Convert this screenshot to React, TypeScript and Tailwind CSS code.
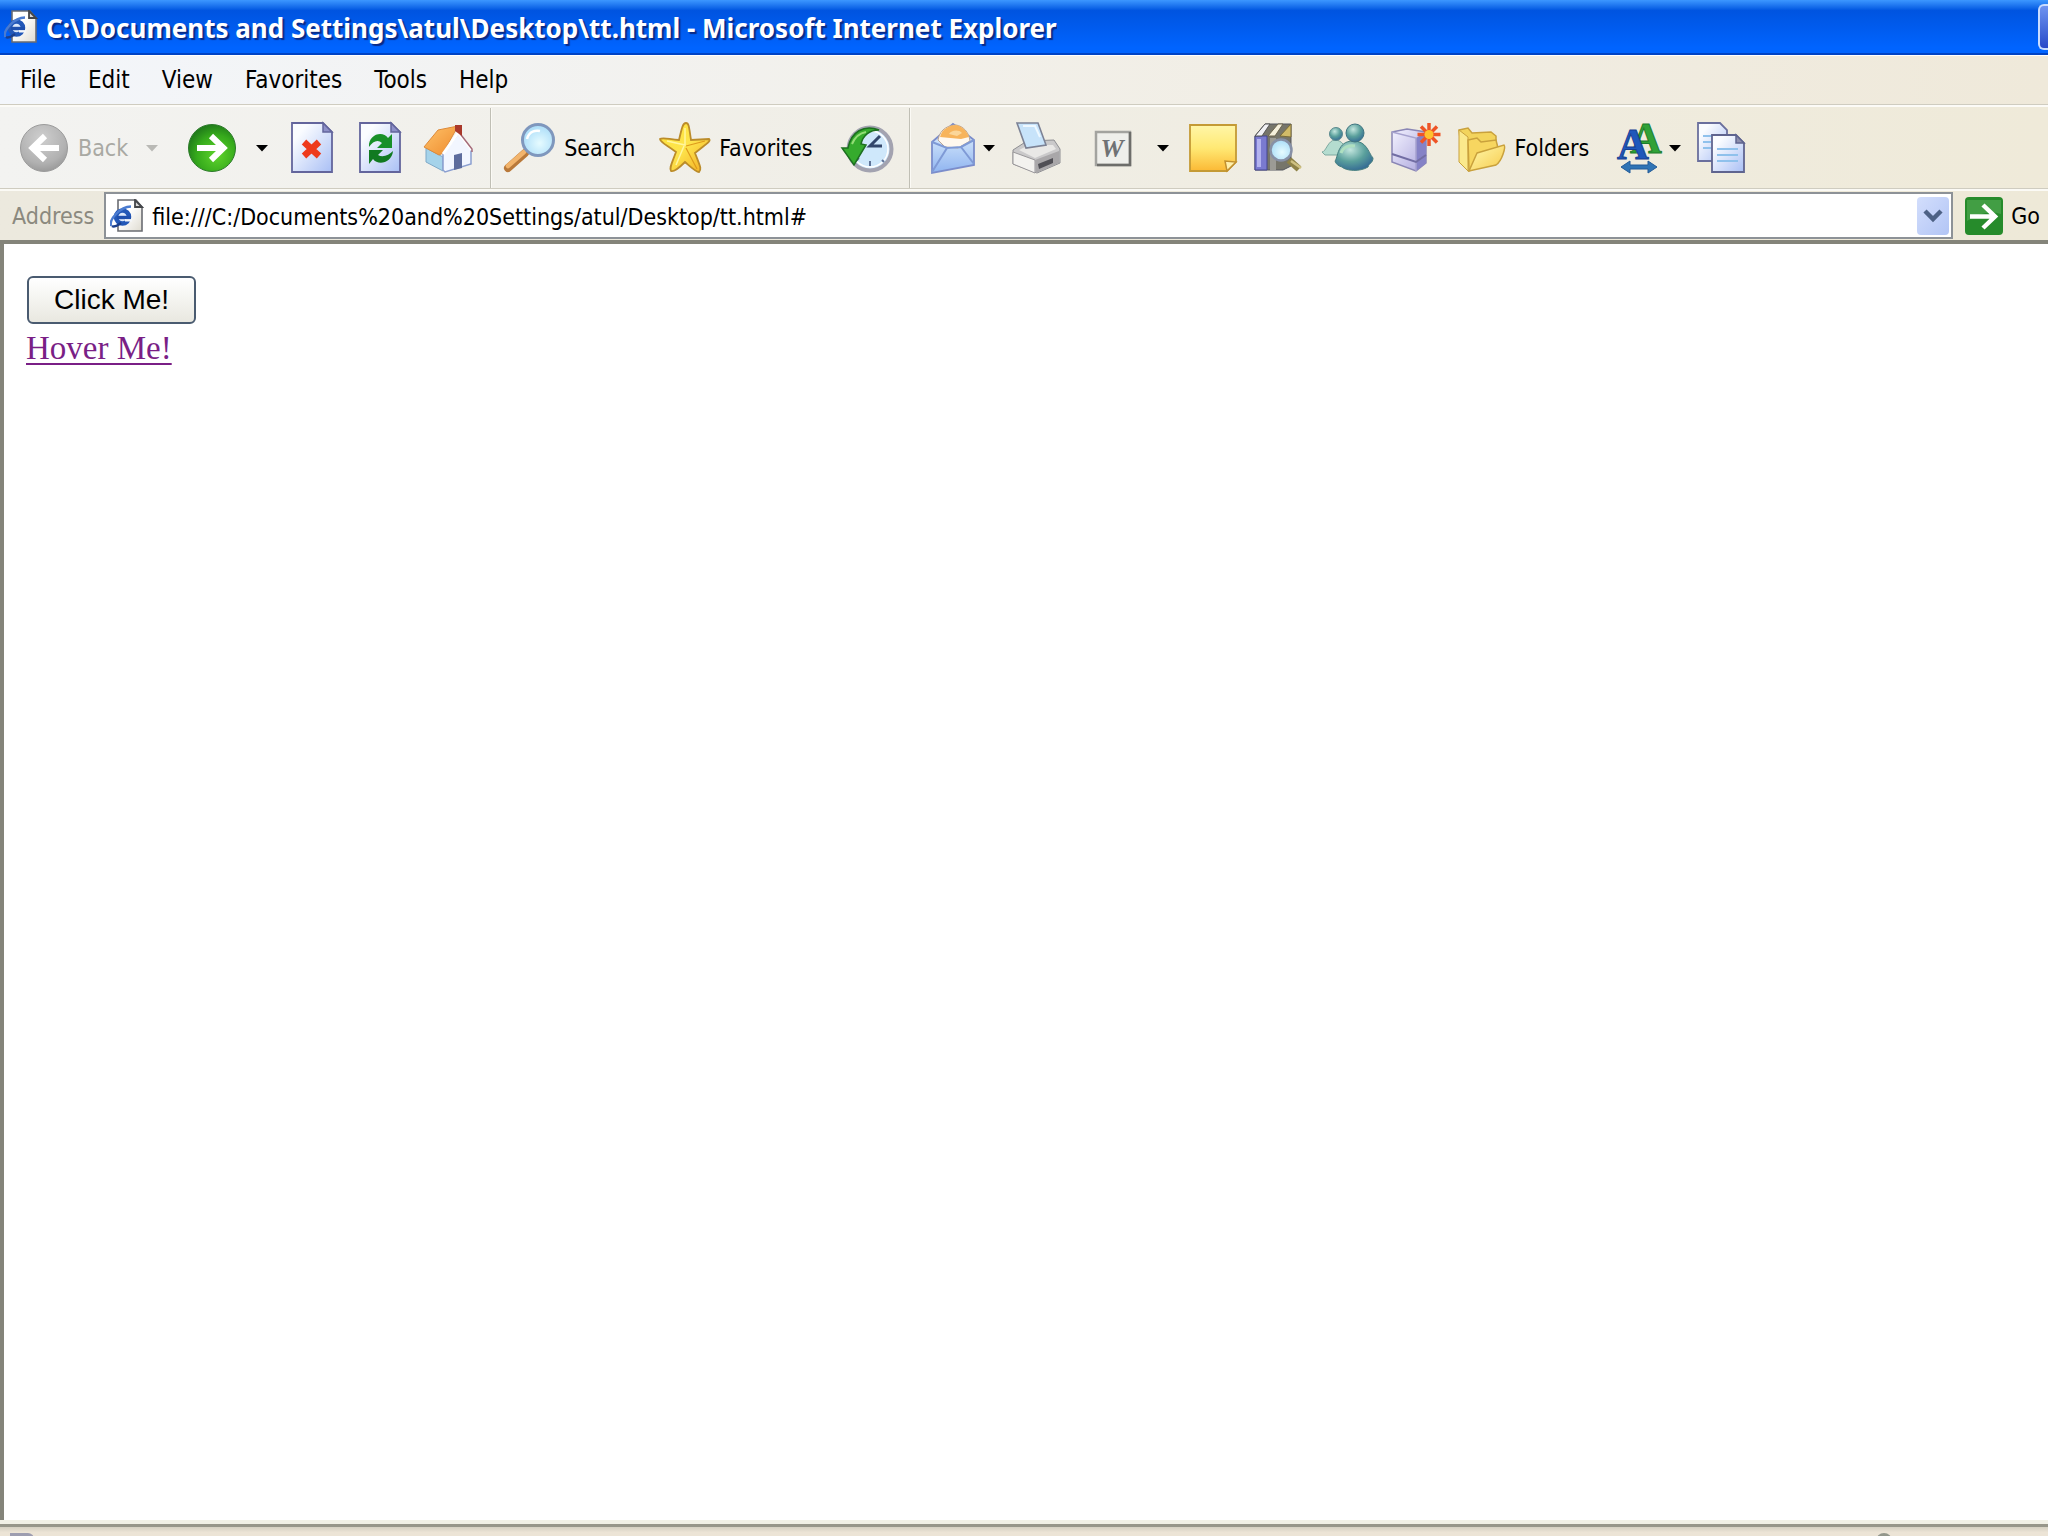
import type { ReactNode } from 'react'

const menuItems = ['File', 'Edit', 'View', 'Favorites', 'Tools', 'Help']

function Icon({ children }: { children: ReactNode }) {
    return (
        <svg viewBox="0 0 52 52" className="size-[52px] shrink-0 overflow-visible" aria-hidden="true">
            {children}
        </svg>
    )
}

function ToolButton({ name, label, className, disabled, children }: {
    name: string
    label?: string
    className: string
    disabled?: boolean
    children: ReactNode
}) {
    return (
        <button
            type="button"
            aria-label={name}
            disabled={disabled}
            className={`flex shrink-0 items-center gap-2 disabled:text-[#a9a9a3] ${className}`}
        >
            <Icon>{children}</Icon>
            {label && <span>{label}</span>}
        </button>
    )
}

function DropArrow({ name, className, disabled }: { name: string; className: string; disabled?: boolean }) {
    return (
        <button type="button" aria-label={name} disabled={disabled} className={`shrink-0 text-black disabled:text-[#b9b9b5] ${className}`}>
            <svg viewBox="0 0 12 8" className="h-2 w-3" aria-hidden="true">
                <path d="M0 1h12L6 7.5z" fill="currentColor" />
            </svg>
        </button>
    )
}

function Separator() {
    return <div className="ml-4 h-20 w-0.5 shrink-0 border-l border-[#c0bfb5] bg-[#fbfaf5]" />
}

function PageIcon({ className }: { className: string }) {
    return (
        <svg viewBox="0 0 34 34" className={className} aria-hidden="true">
            <path d="M8 1h18l6 7v24H8z" fill="url(#paper)" stroke="#6a6c72" strokeWidth="1.6" />
            <path d="M25 1v7h7z" fill="#d8d8d8" stroke="#44464a" strokeWidth="1.8" />
            <circle cx="12.500" cy="18" r="6.500" fill="#dbe8fb" stroke="#2358b8" strokeWidth="4.500" />
            <path d="M7 18.5h14" stroke="#1f50ae" strokeWidth="3.4" />
            <path d="M15 22.500h7v-2.4h-7z" fill="#f4f6fa" />
            <path d="M1 27C-1 20 10 8 21 7.500" fill="none" stroke="#4a7bd0" strokeWidth="2.4" />
            <path d="M2 27c3 2 6-1 9-3" fill="none" stroke="#1b3f8c" strokeWidth="2.4" />
        </svg>
    )
}

function Gradients() {
    return (
        <svg className="absolute size-0" aria-hidden="true">
            <defs>
                <linearGradient id="paper" x1="0" y1="0" x2="1" y2="1">
                    <stop offset="0.4" stopColor="#ffffff" />
                    <stop offset="1" stopColor="#dedbd0" />
                </linearGradient>
                <linearGradient id="bluePaper" x1="0" y1="0" x2="1" y2="1">
                    <stop offset="0.2" stopColor="#fafcff" />
                    <stop offset="1" stopColor="#a9bff5" />
                </linearGradient>
                <radialGradient id="gray" cx="0.45" cy="0.3" r="0.75">
                    <stop offset="0" stopColor="#cfcfcf" />
                    <stop offset="0.7" stopColor="#b1b1b1" />
                    <stop offset="1" stopColor="#959595" />
                </radialGradient>
                <radialGradient id="green" cx="0.6" cy="0.65" r="0.65">
                    <stop offset="0" stopColor="#5fd42c" />
                    <stop offset="0.65" stopColor="#36aa1c" />
                    <stop offset="1" stopColor="#217d1a" />
                </radialGradient>
                <radialGradient id="lens" cx="0.55" cy="0.6" r="0.6">
                    <stop offset="0" stopColor="#e6fbff" />
                    <stop offset="1" stopColor="#a9dcf8" />
                </radialGradient>
                <linearGradient id="gold" x1="0" y1="0" x2="1" y2="1">
                    <stop offset="0" stopColor="#ffe23a" />
                    <stop offset="0.5" stopColor="#fde44c" />
                    <stop offset="1" stopColor="#f3a91f" />
                </linearGradient>
                <linearGradient id="note" x1="0" y1="0" x2="0" y2="1">
                    <stop offset="0" stopColor="#fff6a8" />
                    <stop offset="0.5" stopColor="#ffe974" />
                    <stop offset="1" stopColor="#fbb935" />
                </linearGradient>
                <linearGradient id="roof" x1="0" y1="0" x2="1" y2="1">
                    <stop offset="0" stopColor="#ffc36a" />
                    <stop offset="1" stopColor="#ee8a2c" />
                </linearGradient>
                <linearGradient id="sky" x1="0" y1="0" x2="0" y2="1">
                    <stop offset="0" stopColor="#e8f6ff" />
                    <stop offset="1" stopColor="#8fb4f0" />
                </linearGradient>
                <radialGradient id="person" cx="0.4" cy="0.3" r="0.8">
                    <stop offset="0" stopColor="#c3e6de" />
                    <stop offset="0.5" stopColor="#5aa09c" />
                    <stop offset="1" stopColor="#2c5f92" />
                </radialGradient>
                <linearGradient id="box" x1="0" y1="0" x2="1" y2="1">
                    <stop offset="0" stopColor="#f4f3ff" />
                    <stop offset="1" stopColor="#aaa4dc" />
                </linearGradient>
                <linearGradient id="folder" x1="0" y1="0" x2="1" y2="1">
                    <stop offset="0" stopColor="#fff9b0" />
                    <stop offset="1" stopColor="#f7cb4b" />
                </linearGradient>
            </defs>
        </svg>
    )
}

function TitleBar() {
    return (
        <header className="flex h-[55px] shrink-0 items-center border-b-2 border-[#0043c4] bg-linear-to-b from-[#3c97ff] via-[#0054e0] via-20% to-[#0064ff] to-90% pl-1">
            <PageIcon className="size-[34px] shrink-0" />
            <h1 className="ml-2 truncate pt-0.5 font-['Noto_Sans'] text-[26px] leading-10 font-bold text-white [text-shadow:2px_2px_1px_#0a2a86]">
                C:\Documents and Settings\atul\Desktop\tt.html - Microsoft Internet Explorer
            </h1>
            <button
                type="button"
                aria-label="Minimize"
                className="ml-auto h-[46px] w-2.5 shrink-0 rounded-l-md border-2 border-r-0 border-[#c9dcff] bg-linear-to-b from-[#6f93f0] to-[#2a49c8]"
            />
        </header>
    )
}

function MenuBar() {
    return (
        <nav className="flex h-[50px] shrink-0 items-center gap-8 border-t border-b border-t-white border-b-[#cfccc0] bg-linear-to-r from-[#f3f6fb] via-[#f2f0ea] via-45% to-[#efe9da] pl-5 text-2xl">
            {menuItems.map((item) => (
                <button key={item} type="button">{item}</button>
            ))}
        </nav>
    )
}

function Toolbar() {
    return (
        <div className="flex h-[84px] shrink-0 items-center border-t-2 border-b border-t-[#fcfbf7] border-b-[#cfccc0] bg-linear-to-r from-[#f3f3f1] via-[#f0eee6] via-45% to-[#efead9] pl-[18px]">
            <ToolButton name="Back" label="Back" className="" disabled>
                <circle cx="26" cy="26" r="23.500" fill="url(#gray)" stroke="#9b9b9b" />
                <path d="M41 26H16M27 14 14.500 26 27 38" fill="none" stroke="#fff" strokeWidth="6" />
            </ToolButton>
            <DropArrow name="Back history" className="ml-[18px]" disabled />
            <ToolButton name="Forward" className="ml-7">
                <circle cx="26" cy="26" r="23.500" fill="url(#green)" stroke="#2d7a2b" />
                <path d="M11 26h25M25 14l12.500 12L25 38" fill="none" stroke="#fff" strokeWidth="6" />
            </ToolButton>
            <DropArrow name="Forward history" className="ml-[18px]" />
            <ToolButton name="Stop" className="ml-[18px]">
                <path d="M6 1h31l9 9v40H6z" fill="url(#bluePaper)" stroke="#63659c" strokeWidth="1.8" />
                <path d="M37 1v9h9z" fill="#8e90c8" stroke="#63659c" strokeWidth="1.500" />
                <path d="M18 20l15 14M33 20 18 34" stroke="#ee3a1c" strokeWidth="6.500" />
            </ToolButton>
            <ToolButton name="Refresh" className="ml-4">
                <path d="M6 1h31l9 9v40H6z" fill="url(#bluePaper)" stroke="#63659c" strokeWidth="1.800" />
                <path d="M37 1v9h9z" fill="#8e90c8" stroke="#63659c" strokeWidth="1.500" />
                <path d="M15 25c-1-13 14-17 19-9l4-4v14H23l5-5c-4-4-9-2-13 4z" fill="#189029" />
                <path d="M39 29c-1 12-15 15-20 8l-4 5V28h14l-5 5c5 3 11 0 15-4z" fill="#117a21" />
            </ToolButton>
            <ToolButton name="Home" className="ml-4">
                <path d="M4 26l17 9v14L4 40z" fill="#a5d3ea" stroke="#7ea9c8" />
                <path d="M21 31 36 12l13 15v15L23 50l-2-2z" fill="#f2f6ff" stroke="#8b9fd0" strokeWidth="1.500" />
                <path d="M32 48V33l8-2v15z" fill="#5d6c9d" />
                <path d="M2 25 16 8l20-4-15 27-4 2z" fill="url(#roof)" stroke="#dd8a3a" />
                <path d="M21 32 36 11l14 17" fill="none" stroke="#fff" strokeWidth="3" />
                <path d="M36 9l14 18v3" fill="none" stroke="#a46a78" strokeWidth="1.500" />
                <path d="M33 3h7v11l-7-5z" fill="#a9382a" />
            </ToolButton>
            <Separator />
            <ToolButton name="Search" label="Search" className="ml-3">
                <path d="M21 31 4 46" stroke="#b9793a" strokeWidth="8" strokeLinecap="round" />
                <path d="M20 30 4 44" stroke="#f2b46c" strokeWidth="4.500" strokeLinecap="round" />
                <circle cx="34" cy="18" r="15.500" fill="url(#lens)" stroke="#7f97bd" strokeWidth="3" />
                <path d="M23 17c2-8 9-9 13-8" fill="none" stroke="#fff" strokeWidth="2.500" />
            </ToolButton>
            <ToolButton name="Favorites" label="Favorites" className="ml-6">
                <path
                    d="M27 1c3 0 3 4 5 17l18-1c2 2 0 3-14 14 5 13 7 16 4 19-3 0-6-3-14-10-9 9-12 10-14 9-2-3 1-8 5-19C6 22 1 20 1 17c2-2 8 0 19 1C23 5 24 1 27 1z"
                    fill="url(#gold)"
                    stroke="#bb8c2a"
                    strokeWidth="1.800"
                />
                <path d="M26 6v17L8 19M25 24l-8 19" fill="none" stroke="#fff6a0" strokeWidth="1.500" />
                <path d="M27 24l19-5M27 26l11 21" stroke="#dd9a1c" strokeWidth="1.200" />
            </ToolButton>
            <ToolButton name="History" className="ml-7">
                <circle cx="29" cy="27" r="21.500" fill="#cfe8fb" stroke="#a3a3b0" strokeWidth="4" />
                <circle cx="29" cy="27" r="18" fill="none" stroke="#fff" strokeWidth="1.500" />
                <path d="M39 14 29 24h12" fill="none" stroke="#33476b" strokeWidth="3" />
                <path d="M29 39v5M18 36l-3 3M41 38l2 2" stroke="#5f7397" strokeWidth="2" />
                <path d="M1 26h6C10 10 23 2 38 8c-9 0-16 5-18 14l5 1-12 20z" fill="#35ab2d" stroke="#1d6f20" strokeWidth="1.500" />
                <path d="M11 22c3-7 8-11 14-12" fill="none" stroke="#94dd77" strokeWidth="2" />
            </ToolButton>
            <Separator />
            <ToolButton name="Mail" className="ml-4">
                <path d="M5 20 26 2l21 16v25L5 51z" fill="url(#sky)" stroke="#7b8dcb" strokeWidth="1.800" />
                <path d="M11 18C13 6 23 3 29 3c7 1 13 7 14 16L31 26l-13-1z" fill="#fff8ee" stroke="#b9a494" />
                <path d="M13 15C15 6 24 3 29 3c6 1 11 6 13 12l-8 2z" fill="#f7b45c" />
                <path d="M22 12c2-4 10-5 13-1l-5 3z" fill="#fbd699" />
                <path d="M5 20l15 6 14-1 13-7M5 50l15-24M47 42 34 25" fill="none" stroke="#7f9ad6" strokeWidth="2" />
            </ToolButton>
            <DropArrow name="Mail options" className="ml-1" />
            <ToolButton name="Print" className="ml-4">
                <path d="M2 28l14-9 27-1 6 9v14L26 51 2 42z" fill="#cac9ca" stroke="#8e8e92" />
                <path d="M2 30l22 8v13L2 42z" fill="#f3f2ef" stroke="#99979a" />
                <path d="M24 38l24-9v12L25 51z" fill="#a9a7a9" />
                <path d="M27 42l15-6v5l-14 6z" fill="#504f55" />
                <path d="M8 28l10-5h24l3 4-21 9z" fill="#e9e8e6" />
                <path d="M6 1h21l8 22-20 3z" fill="#c7e3fa" stroke="#7c8295" strokeWidth="1.600" />
                <path d="M12 4h12l5 11" fill="none" stroke="#eef8ff" strokeWidth="2" />
            </ToolButton>
            <ToolButton name="Edit with Word" className="ml-6">
                <path d="M9 10h34v33H9z" fill="#efefeb" stroke="#a3a39f" strokeWidth="2.500" />
                <path d="M10 43h33V10" fill="none" stroke="#6d6d6a" strokeWidth="2.500" />
                <text x="25" y="35" textAnchor="middle" fontFamily="Liberation Serif, serif" fontSize="26" fontStyle="italic" fontWeight="700" fill="#707274">W</text>
            </ToolButton>
            <DropArrow name="Edit options" className="ml-[18px]" />
            <ToolButton name="Notes" className="ml-[18px]">
                <path d="M3 3h46v37l-9 9H3z" fill="url(#note)" stroke="#c49a35" strokeWidth="1.800" />
                <path d="M49 40l-9 9-2-10z" fill="#fff0ac" stroke="#c1902f" strokeWidth="1.500" />
            </ToolButton>
            <ToolButton name="Research" className="ml-3.5">
                <path d="M2 14 12 2h26v42l-8 4H2z" fill="#76756a" stroke="#55575f" />
                <path d="M2 14h12v34H2z" fill="#7a7ad0" stroke="#45468e" />
                <path d="M4 17h4v28H4z" fill="#b3b3ef" />
                <path d="M2 14 12 2h5L9 14z" fill="#f1f1f4" stroke="#555" />
                <path d="M15 14 25 2h5l-8 12z" fill="#f5f0dc" stroke="#6c654c" />
                <path d="M27 14 38 2v13z" fill="#d1bb68" stroke="#7a6c39" />
                <path d="M17 16h6v32h-6z" fill="#9c9b95" />
                <path d="M36 38l10 9" stroke="#8e8247" strokeWidth="7" />
                <path d="M38 39l10 7" stroke="#cfc182" strokeWidth="2.500" />
                <circle cx="28" cy="28" r="10.500" fill="url(#lens)" stroke="#8790a6" strokeWidth="2.500" />
            </ToolButton>
            <ToolButton name="Messenger" className="ml-4">
                <path d="M1 30c4 0 6-12 13-12s12 7 10 15H4z" fill="#b4dccf" stroke="#7fa9a0" />
                <circle cx="15" cy="12" r="6.500" fill="url(#person)" stroke="#5d8b8f" />
                <path d="M14 39c3-3 2-20 18-20 14 0 15 11 20 17 0 5-4 5-5 9-8 5-22 4-26 0-4-1-6-3-7-6z" fill="url(#person)" stroke="#47807f" />
                <path d="M20 31c2-6 8-8 14-7" fill="none" stroke="#aee0c0" strokeWidth="3" />
                <circle cx="34" cy="11" r="9" fill="url(#person)" stroke="#3f7480" />
            </ToolButton>
            <ToolButton name="Add-ons" className="ml-4">
                <path d="M3 10 18 7l19 3v31l-10 8L3 40z" fill="url(#box)" stroke="#8a86b5" strokeWidth="1.500" />
                <path d="M27 16l10-6v31l-10 8z" fill="#8582c6" />
                <path d="M3 10l24 6v33" fill="none" stroke="#a7a3cf" strokeWidth="1.500" />
                <path d="M3 32l24 8 10-7" fill="none" stroke="#716da3" strokeWidth="2" />
                <path d="M40 1v23M28.500 12.500h23M32 4.500l16 16M48 4.500l-16 16" stroke="#ee5426" strokeWidth="3.500" />
                <circle cx="40" cy="12.500" r="4.500" fill="#ffc12e" />
            </ToolButton>
            <ToolButton name="Folders" label="Folders" className="ml-3.5">
                <path d="M4 8l9-2 4 5 19-1 5 4v20L8 41z" fill="#f3d45c" stroke="#c9a13c" strokeWidth="1.500" />
                <path d="M4 8l9 7v34L4 40z" fill="#fbe98c" stroke="#c9a13c" />
                <path d="M13 18l9-2 4 4 15-2 2 8-22 20-7 3z" fill="#f7d660" stroke="#c9a13c" strokeWidth="1.500" />
                <path d="M22 31l27-8c2 2-2 16-8 20l-27 6z" fill="url(#folder)" stroke="#c9a13c" strokeWidth="1.500" />
            </ToolButton>
            <ToolButton name="Text size" className="ml-6">
                <text x="33" y="31" textAnchor="middle" fontFamily="Liberation Serif, serif" fontSize="44" fontWeight="700" fill="#31a236" stroke="#1c7c2c">A</text>
                <text x="20" y="37" textAnchor="middle" fontFamily="Liberation Serif, serif" fontSize="44" fontWeight="700" fill="#1f58bb" stroke="#173f93">A</text>
                <path d="M8 45l9-6v4h18v-4l9 6-9 6v-4H17v4z" fill="#2f74b5" stroke="#235b98" />
            </ToolButton>
            <DropArrow name="Text size options" className="ml-1" />
            <ToolButton name="Copy" className="ml-3.5">
                <path d="M3 1h22l7 7v31H3z" fill="url(#bluePaper)" stroke="#6a6f9d" strokeWidth="1.800" />
                <path d="M8 14h14M8 20h8M8 26h8" stroke="#8fc1ec" strokeWidth="2" />
                <path d="M17 13h24l8 8v29H17z" fill="url(#bluePaper)" stroke="#5f648f" strokeWidth="1.800" />
                <path d="M41 13v8h8z" fill="#8c8ead" stroke="#5f648f" strokeWidth="1.500" />
                <path d="M22 27h21M22 33h21M22 39h21" stroke="#8fc1ec" strokeWidth="2" />
            </ToolButton>
        </div>
    )
}

function AddressBar() {
    return (
        <form className="flex h-[51px] shrink-0 items-center border-t-2 border-t-[#fbfaf5] bg-linear-to-r from-[#ece9de] to-[#eee9d8] pl-3">
            <label htmlFor="address" className="text-[#8b897f]">Address</label>
            <div className="ml-2.5 flex h-[47px] grow items-center border-2 border-[#8d9297] bg-white pl-1">
                <PageIcon className="size-[34px] shrink-0" />
                <input
                    id="address"
                    type="text"
                    defaultValue="file:///C:/Documents%20and%20Settings/atul/Desktop/tt.html#"
                    className="ml-2 min-w-0 grow pt-0.5 outline-none"
                />
                <button
                    type="button"
                    aria-label="Show addresses"
                    className="mr-0.5 flex h-[38px] w-8 shrink-0 items-center justify-center rounded-sm bg-linear-to-br from-[#d3defc] to-[#b2c5f5]"
                >
                    <svg viewBox="0 0 20 14" className="h-3.5 w-5" aria-hidden="true">
                        <path d="M2 2l8 8 8-8" fill="none" stroke="#4d6185" strokeWidth="4.500" />
                    </svg>
                </button>
            </div>
            <button type="button" className="ml-3 flex shrink-0 items-center gap-2 pr-2">
                <svg viewBox="0 0 38 38" className="size-[38px]" aria-hidden="true">
                    <rect width="38" height="38" rx="4" fill="#268b2b" />
                    <path d="M2 3h34v14Q20 12 2 24z" fill="#55ac55" opacity="0.6" />
                    <path d="M5 19.500h23M18 8l12 11.500L18 31" fill="none" stroke="#fff" strokeWidth="4.500" />
                </svg>
                Go
            </button>
        </form>
    )
}

export default function App() {
    return (
        <div className="flex h-screen flex-col overflow-hidden bg-[#ece9d8] font-['DejaVu_Sans_Condensed','Noto_Sans',sans-serif] text-[23px] leading-8 text-black">
            <Gradients />
            <TitleBar />
            <MenuBar />
            <Toolbar />
            <AddressBar />
            <main className="flex grow flex-col items-start border-t-4 border-l-4 border-[#84847a] bg-white px-[22px] pt-8">
                <button
                    type="button"
                    className="ml-px h-12 rounded-md border-2 border-[#4a5b70] bg-linear-to-b from-white to-[#e9e8e0] px-[25px] font-['Liberation_Sans'] text-[28px]"
                >
                    Click Me!
                </button>
                <a href="#" className="mt-1 font-['Liberation_Serif'] text-[33px] leading-10 text-[#7a1f86] underline decoration-2 underline-offset-4">
                    Hover Me!
                </a>
            </main>
            <footer className="h-4 shrink-0 overflow-hidden border-t-4 border-[#f1f0e6]">
                <div className="flex h-3 justify-between border-t-[3px] border-[#97968a] bg-linear-to-b from-[#d5d0c2] to-[#ece4d6] to-60% pt-1.5 pr-[156px] pl-2.5">
                    <div className="h-2 w-6 rounded-tr-md bg-[#9d9db0]" />
                    <div className="h-2 w-4 rounded-t-full bg-[#93978c]" />
                </div>
            </footer>
        </div>
    )
}
